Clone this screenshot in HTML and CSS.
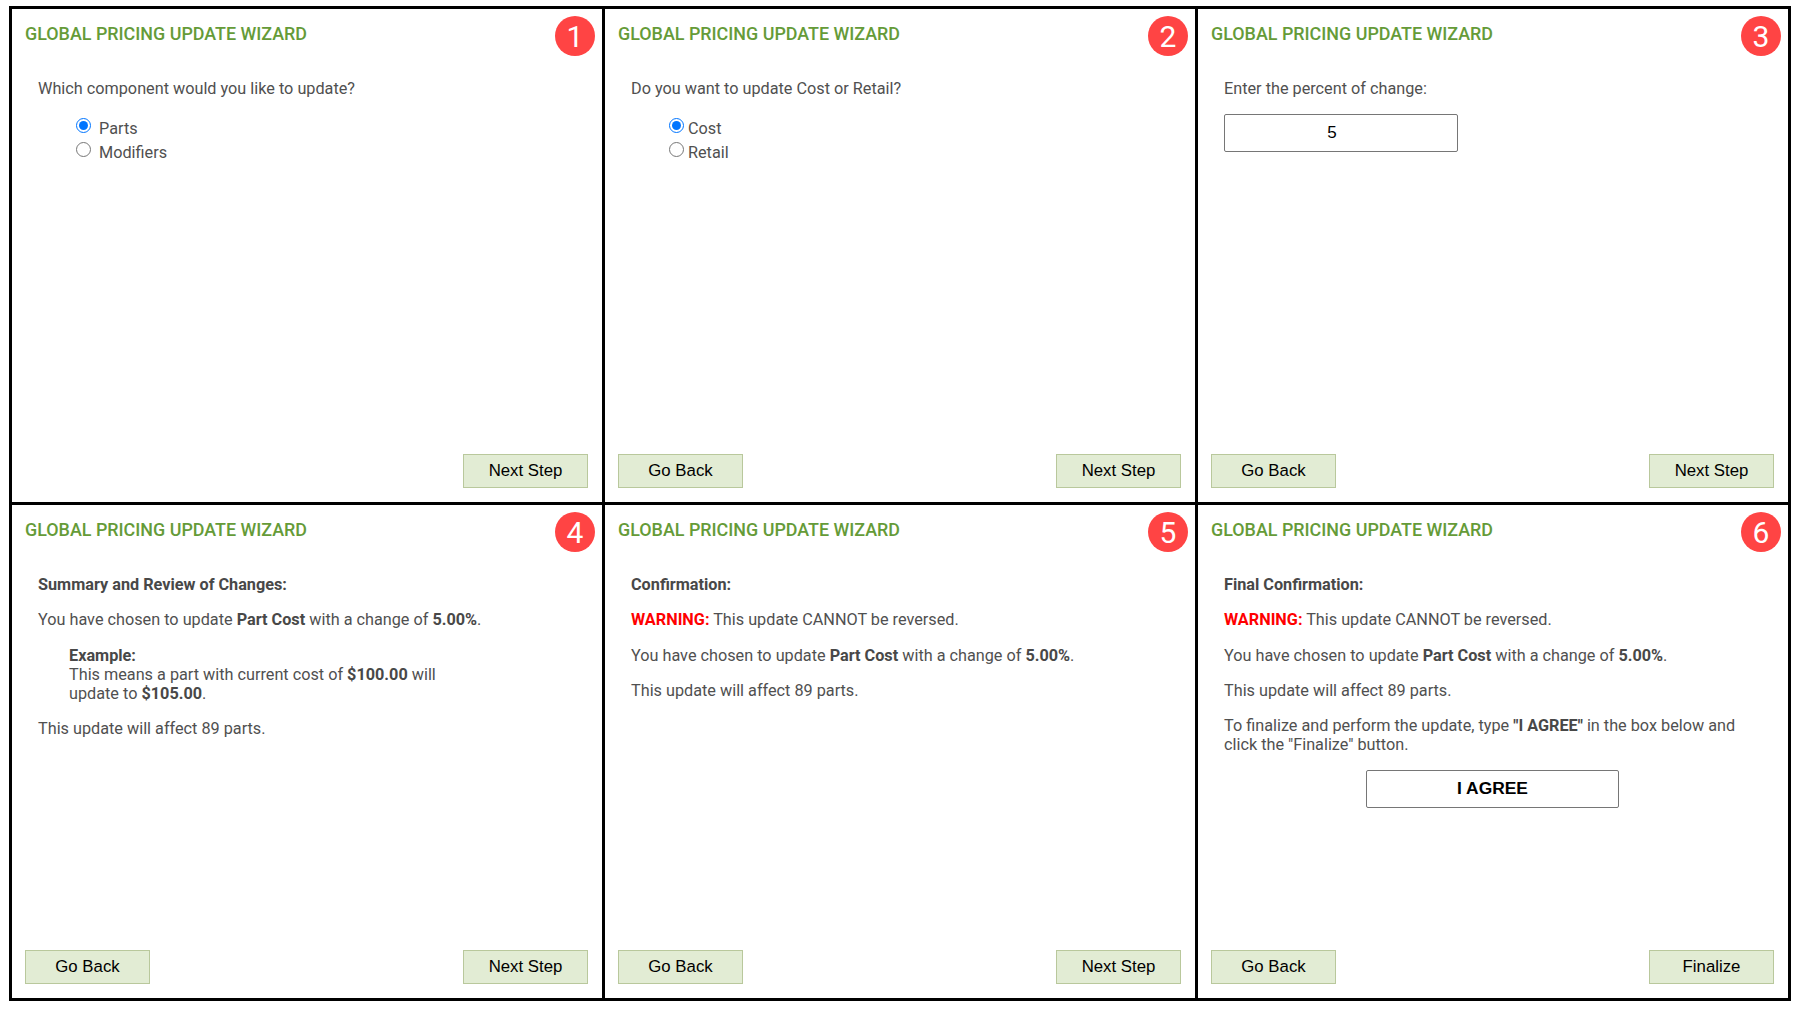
FILE: index.html
```html
<!DOCTYPE html>
<html lang="en">
<head>
    <meta charset="UTF-8">
    <title>Global Pricing Update Wizard</title>
    <link rel="stylesheet" href="styles.css">
</head>
<body>
    <div class="wizard">

        <!-- Step 1 -->
        <section class="panel">
            <h2 class="panel-title">GLOBAL PRICING UPDATE WIZARD</h2>
            <span class="step-badge">1</span>
            <div class="panel-body">
                <p>Which component would you like to update?</p>
                <div class="radio-group">
                    <label class="radio-row"><input type="radio" name="component" checked>Parts</label>
                    <label class="radio-row"><input type="radio" name="component">Modifiers</label>
                </div>
            </div>
            <div class="panel-footer">
                <button class="wizard-btn next-btn">Next Step</button>
            </div>
        </section>

        <!-- Step 2 -->
        <section class="panel">
            <h2 class="panel-title">GLOBAL PRICING UPDATE WIZARD</h2>
            <span class="step-badge">2</span>
            <div class="panel-body">
                <p>Do you want to update Cost or Retail?</p>
                <div class="radio-group">
                    <label class="radio-row tight"><input type="radio" name="field" checked>Cost</label>
                    <label class="radio-row tight"><input type="radio" name="field">Retail</label>
                </div>
            </div>
            <div class="panel-footer">
                <button class="wizard-btn">Go Back</button>
                <button class="wizard-btn next-btn">Next Step</button>
            </div>
        </section>

        <!-- Step 3 -->
        <section class="panel">
            <h2 class="panel-title">GLOBAL PRICING UPDATE WIZARD</h2>
            <span class="step-badge">3</span>
            <div class="panel-body">
                <p>Enter the percent of change:</p>
                <input type="text" class="percent-input" value="5">
            </div>
            <div class="panel-footer">
                <button class="wizard-btn">Go Back</button>
                <button class="wizard-btn next-btn">Next Step</button>
            </div>
        </section>

        <!-- Step 4 -->
        <section class="panel">
            <h2 class="panel-title">GLOBAL PRICING UPDATE WIZARD</h2>
            <span class="step-badge">4</span>
            <div class="panel-body">
                <p><b>Summary and Review of Changes:</b></p>
                <p>You have chosen to update <b>Part Cost</b> with a change of <b>5.00%</b>.</p>
                <p class="example"><b>Example:</b><br>This means a part with current cost of <b>$100.00</b> will update to <b>$105.00</b>.</p>
                <p>This update will affect 89 parts.</p>
            </div>
            <div class="panel-footer">
                <button class="wizard-btn">Go Back</button>
                <button class="wizard-btn next-btn">Next Step</button>
            </div>
        </section>

        <!-- Step 5 -->
        <section class="panel">
            <h2 class="panel-title">GLOBAL PRICING UPDATE WIZARD</h2>
            <span class="step-badge">5</span>
            <div class="panel-body">
                <p><b>Confirmation:</b></p>
                <p><b class="warning">WARNING:</b> This update CANNOT be reversed.</p>
                <p>You have chosen to update <b>Part Cost</b> with a change of <b>5.00%</b>.</p>
                <p>This update will affect 89 parts.</p>
            </div>
            <div class="panel-footer">
                <button class="wizard-btn">Go Back</button>
                <button class="wizard-btn next-btn">Next Step</button>
            </div>
        </section>

        <!-- Step 6 -->
        <section class="panel">
            <h2 class="panel-title">GLOBAL PRICING UPDATE WIZARD</h2>
            <span class="step-badge">6</span>
            <div class="panel-body">
                <p><b>Final Confirmation:</b></p>
                <p><b class="warning">WARNING:</b> This update CANNOT be reversed.</p>
                <p>You have chosen to update <b>Part Cost</b> with a change of <b>5.00%</b>.</p>
                <p>This update will affect 89 parts.</p>
                <p class="finalize-note">To finalize and perform the update, type <b>"I AGREE"</b> in the box below and click the "Finalize" button.</p>
                <input type="text" class="agree-input" value="I AGREE">
            </div>
            <div class="panel-footer">
                <button class="wizard-btn">Go Back</button>
                <button class="wizard-btn next-btn">Finalize</button>
            </div>
        </section>

    </div>
</body>
</html>
```

FILE: styles.css
```css
/* Six wizard steps in a 3x2 sheet, black gaps act as the lines */
body {
    margin: 6px 0 0 9px;
    background: #fff;
    font-family: Roboto, "Liberation Sans", sans-serif;
}

.wizard {
    display: grid;
    grid-template-columns: repeat(3, 590px);
    grid-template-rows: repeat(2, 493px);
    gap: 3px;
    padding: 3px;
    width: 1782px;
    box-sizing: border-box;
    background: #000;
}

.panel {
    position: relative;
    display: flex;
    flex-direction: column;
    background: #fff;
    padding: 14px 14px 14px 13px;
    box-sizing: border-box;
}

.panel-title {
    margin: 0;
    font-size: 17.9px;
    line-height: 22px;
    font-weight: 500;
    color: #659b38;
}

.step-badge {
    position: absolute;
    top: 7px;
    right: 7px;
    width: 40px;
    height: 40px;
    border-radius: 50%;
    background: #ff4444;
    color: #fff;
    font-size: 30px;
    line-height: 41px;
    text-align: center;
}

.panel-body {
    flex: 1;
    padding: 34px 0 0 13px;
    font-size: 16.24px;
    line-height: 19px;
    color: #505050;
}

.panel-body p {
    margin: 0 0 16.4px;
}

.panel-body b {
    font-weight: 700;
    color: #484848;
}

.panel-body b.warning {
    color: #ff0000;
}

.radio-group {
    padding: 3px 0 0 37px;
}

.radio-row {
    display: flex;
    align-items: flex-start;
    height: 24px;
    line-height: 24px;
}

.radio-row input {
    width: 15px;
    height: 15px;
    margin: 1px 8px 0 1px;
}

.radio-row.tight input {
    margin-right: 4px;
}

.example {
    width: 400px;
    padding-left: 31px;
}

.panel-body .finalize-note {
    max-width: 525px;
    margin-top: -1px;
}

.percent-input,
.agree-input {
    display: block;
    height: 38px;
    box-sizing: border-box;
    border: 1px solid #767676;
    border-radius: 2px;
    text-align: center;
    color: #000;
    background: #fff;
}

.percent-input {
    width: 234px;
    font: 17px "Liberation Sans", sans-serif;
    padding-right: 20px;
}

.agree-input {
    width: 253px;
    margin: 5px 0 0 142px;
    font: 700 17.4px "Liberation Sans", sans-serif;
}

.panel-footer {
    display: flex;
    justify-content: space-between;
}

.wizard-btn {
    width: 125px;
    height: 34px;
    padding: 0 0 1px;
    background: #e2ecd4;
    border: 1px solid #b9c89c;
    font: 16.8px "Liberation Sans", sans-serif;
    color: #000;
}

.next-btn {
    margin-left: auto;
}
```
